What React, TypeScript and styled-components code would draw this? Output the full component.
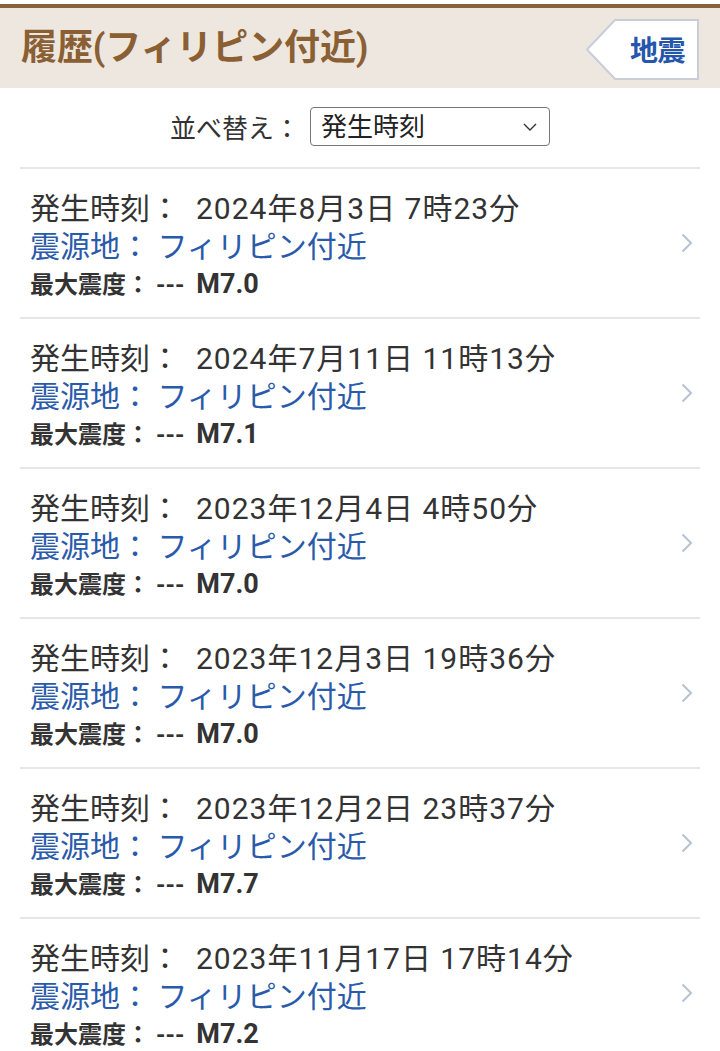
import styled, { createGlobalStyle } from "styled-components";

interface Quake {
  time: string;
  mag: string;
}

const quakes: Quake[] = [
  { time: "2024年8月3日 7時23分", mag: "M7.0" },
  { time: "2024年7月11日 11時13分", mag: "M7.1" },
  { time: "2023年12月4日 4時50分", mag: "M7.0" },
  { time: "2023年12月3日 19時36分", mag: "M7.0" },
  { time: "2023年12月2日 23時37分", mag: "M7.7" },
  { time: "2023年11月17日 17時14分", mag: "M7.2" },
];

const GlobalStyle = createGlobalStyle`
  html, body {
    margin: 0;
    padding: 0;
    background: #fff;
    font-family: Roboto, "Noto Sans CJK JP", sans-serif;
    color: #333;
  }
  * {
    box-sizing: border-box;
  }
`;

const Page = styled.div`
  width: 720px;
  padding-top: 4px;
`;

const Header = styled.header`
  border-top: 4px solid #8a6239;
  background: #ede7e0;
  height: 84px;
  display: flex;
  align-items: center;
  justify-content: space-between;
  padding: 0 20px 0 21px;
`;

const Title = styled.h1`
  margin: 0;
  font-size: 36px;
  font-weight: bold;
  color: #8a5f33;
  letter-spacing: -0.1px;
  line-height: 1;
`;

const BackButton = styled.a`
  position: relative;
  width: 114px;
  height: 61px;
  display: flex;
  align-items: center;
  justify-content: flex-end;
  padding-right: 15px;
  text-decoration: none;
  margin-top: 2px;
`;

const BackShape = styled.svg`
  position: absolute;
  inset: 0;
`;

const BackLabel = styled.span`
  position: relative;
  font-size: 28px;
  font-weight: bold;
  color: #2457ab;
  letter-spacing: -0.5px;
`;

const SortRow = styled.div`
  display: flex;
  justify-content: center;
  align-items: center;
  padding: 19px 0 21px;
  gap: 10px;
`;

const SortLabel = styled.span`
  font-size: 26px;
  color: #333;
`;

const SelectBox = styled.div`
  position: relative;
  width: 240px;
  height: 39px;
`;

const Select = styled.select`
  appearance: none;
  width: 100%;
  height: 100%;
  border: 1.5px solid #777;
  border-radius: 4px;
  background: #fff;
  font-family: Roboto, "Noto Sans CJK JP", sans-serif;
  font-size: 26px;
  color: #222;
  padding: 0 0 0 10px;
  line-height: 1;
`;

const SelectChevron = styled.svg`
  position: absolute;
  right: 13px;
  top: 16px;
  pointer-events: none;
`;

const List = styled.ul`
  list-style: none;
  margin: 0 20px;
  padding: 0;
`;

const Item = styled.li`
  border-top: 2px solid #e6e6e6;
  height: 150px;
  padding: 0 7px 0 10px;
  display: flex;
  align-items: center;
  justify-content: space-between;
`;

const Info = styled.div`
  display: flex;
  flex-direction: column;
  align-self: flex-start;
  margin-top: 21px;
`;

const Line = styled.div<{ $tone?: "blue" }>`
  font-size: 30px;
  height: 38px;
  line-height: 38px;
  color: ${(p) => (p.$tone === "blue" ? "#2a5aaa" : "#333")};
  white-space: pre;
`;

const TimeValue = styled.span`
  margin-left: 16px;
  letter-spacing: 1px;
`;

const Intensity = styled.div`
  font-size: 24px;
  height: 38px;
  line-height: 38px;
  font-weight: bold;
  color: #333;
  white-space: pre;
`;

const Magnitude = styled.span`
  margin-left: 12px;
  font-size: 27px;
  line-height: 1;
`;

const Chevron = () => (
  <svg width="12" height="20" viewBox="0 0 12 20">
    <path d="M1.5 1.5 L10 10 L1.5 18.5" fill="none" stroke="#b8c2ce" strokeWidth="2" />
  </svg>
);

export default function App() {
  return (
    <Page>
      <GlobalStyle />
      <Header>
        <Title>履歴(フィリピン付近)</Title>
        <BackButton href="#">
          <BackShape width="114" height="61" viewBox="0 0 114 61">
            <polygon
              points="112,1 29,1 1,30.5 29,60 112,60"
              fill="#fff"
              stroke="#c9cdd8"
              strokeWidth="2"
            />
          </BackShape>
          <BackLabel>地震</BackLabel>
        </BackButton>
      </Header>
      <SortRow>
        <SortLabel>並べ替え：</SortLabel>
        <SelectBox>
          <Select defaultValue="time">
            <option value="time">発生時刻</option>
            <option value="mag">マグニチュード</option>
          </Select>
          <SelectChevron width="14" height="8" viewBox="0 0 14 8">
            <path d="M1 1 L7 7 L13 1" fill="none" stroke="#333" strokeWidth="1.4" />
          </SelectChevron>
        </SelectBox>
      </SortRow>
      <List>
        {quakes.map((q) => (
          <Item key={q.time}>
            <Info>
              <Line>
                発生時刻：<TimeValue>{q.time}</TimeValue>
              </Line>
              <Line $tone="blue">震源地： フィリピン付近</Line>
              <Intensity>
                最大震度： ---<Magnitude>{q.mag}</Magnitude>
              </Intensity>
            </Info>
            <Chevron />
          </Item>
        ))}
      </List>
    </Page>
  );
}
